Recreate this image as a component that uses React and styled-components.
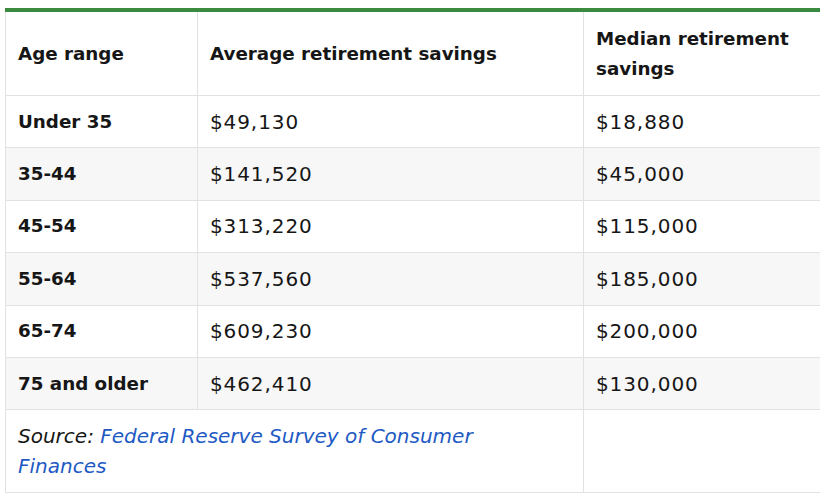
import React from 'react';
import styled, { createGlobalStyle } from 'styled-components';

const GlobalStyle = createGlobalStyle`
  html, body {
    margin: 0;
    padding: 0;
    background: #fff;
    overflow: hidden;
  }
  body {
    font-family: 'DejaVu Sans', 'Open Sans', sans-serif;
    color: #161616;
  }
`;

const Wrapper = styled.div`
  padding: 8px 0 0 5px;
  width: 840px;
`;

const Table = styled.table`
  border-collapse: collapse;
  table-layout: fixed;
  width: 840px;
  border-top: 4px solid #3a8a3f;
  font-size: 20px;
  line-height: 30px;
`;

const Th = styled.th`
  text-align: left;
  font-weight: 700;
  font-size: 18.3px;
  padding: 11.5px 12px;
  border: 1px solid #e2e2e2;
  border-top: none;
  vertical-align: middle;
`;

const Row = styled.tr`
  background: ${(p) => (p.$striped ? '#f7f7f7' : '#fff')};
`;

const Td = styled.td`
  padding: 10.7px 12px;
  border: 1px solid #e2e2e2;
  vertical-align: middle;
`;

const LabelCell = styled(Td)`
  font-weight: 700;
  font-size: 18.3px;
`;

const AmountCell = styled(Td)`
  letter-spacing: 0.9px;
`;

const SourceCell = styled(Td)`
  padding: 11px 60px 11px 12px;
  font-style: italic;
`;

const SourceLink = styled.a`
  color: #2159c4;
  text-decoration: none;
`;

const rows = [
  ['Under 35', '$49,130', '$18,880'],
  ['35-44', '$141,520', '$45,000'],
  ['45-54', '$313,220', '$115,000'],
  ['55-64', '$537,560', '$185,000'],
  ['65-74', '$609,230', '$200,000'],
  ['75 and older', '$462,410', '$130,000'],
];

export default function App() {
  return (
    <>
      <GlobalStyle />
      <Wrapper>
        <Table>
          <colgroup>
            <col style={{ width: 192 }} />
            <col style={{ width: 386 }} />
            <col style={{ width: 262 }} />
          </colgroup>
          <thead>
            <tr>
              <Th>Age range</Th>
              <Th>Average retirement savings</Th>
              <Th>Median retirement savings</Th>
            </tr>
          </thead>
          <tbody>
            {rows.map((r, i) => (
              <Row key={r[0]} $striped={i % 2 === 1}>
                <LabelCell>{r[0]}</LabelCell>
                <AmountCell>{r[1]}</AmountCell>
                <AmountCell>{r[2]}</AmountCell>
              </Row>
            ))}
            <Row>
              <SourceCell colSpan={2}>
                Source:{' '}
                <SourceLink href="#">
                  Federal Reserve Survey of Consumer Finances
                </SourceLink>
              </SourceCell>
              <Td />
            </Row>
          </tbody>
        </Table>
      </Wrapper>
    </>
  );
}
